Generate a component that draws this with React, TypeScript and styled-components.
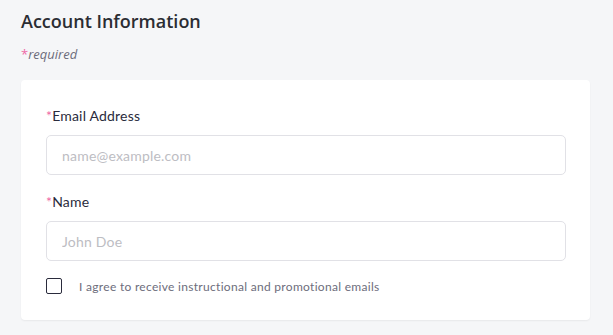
import React from "react";
import styled, { createGlobalStyle } from "styled-components";

const GlobalStyle = createGlobalStyle`
  body {
    margin: 0;
    background: #f5f6f8;
    font-family: Lato, "Open Sans", sans-serif;
  }
`;

const Page = styled.div`
  padding: 9px 23px 15px 21px;
`;

const Title = styled.h2`
  margin: 0;
  font-family: "Open Sans", sans-serif;
  font-size: 18px;
  font-weight: 600;
  color: #2b2d33;
  line-height: 24px;
`;

const Required = styled.div`
  margin-top: 12px;
  font-family: "Open Sans", sans-serif;
  font-style: italic;
  font-size: 13px;
  color: #6c6c7a;
  line-height: 18px;
`;

const Star = styled.span`
  color: #ef6aa6;
  font-style: normal;
`;

const Card = styled.div`
  margin-top: 17px;
  background: #fff;
  border-radius: 4px;
  box-shadow: 0 1px 2px rgba(0, 0, 0, 0.06);
  padding: 27px 24px 26px 25px;
  display: flex;
  flex-direction: column;
`;

const Field = styled.div`
  display: flex;
  flex-direction: column;
  margin-bottom: 18px;
`;

const Label = styled.label`
  font-size: 14px;
  color: #2a2b3c;
  line-height: 18px;
  letter-spacing: 0.2px;
  margin-bottom: 10px;
`;

const Input = styled.input`
  height: 40px;
  box-sizing: border-box;
  border: 1px solid #e1e1e6;
  border-radius: 5px;
  padding: 0 15px;
  font-family: Lato, sans-serif;
  font-size: 14px;
  letter-spacing: 0.2px;
  color: #333;
  outline: none;
  &::placeholder {
    color: #bdbdc3;
  }
`;

const CheckRow = styled.label`
  display: flex;
  align-items: center;
  gap: 17px;
  margin-top: -1px;
  font-size: 12px;
  letter-spacing: 0.3px;
  color: #6d6d7c;
`;

const Box = styled.span`
  width: 16px;
  height: 16px;
  box-sizing: border-box;
  border: 1.5px solid #2a2b3c;
  border-radius: 2px;
`;

export default function App() {
  return (
    <>
      <GlobalStyle />
      <Page>
        <Title>Account Information</Title>
        <Required>
          <Star>*</Star>required
        </Required>
        <Card>
          <Field>
            <Label>
              <Star>*</Star>Email Address
            </Label>
            <Input placeholder="name@example.com" />
          </Field>
          <Field>
            <Label>
              <Star>*</Star>Name
            </Label>
            <Input placeholder="John Doe" />
          </Field>
          <CheckRow>
            <Box />
            I agree to receive instructional and promotional emails
          </CheckRow>
        </Card>
      </Page>
    </>
  );
}
